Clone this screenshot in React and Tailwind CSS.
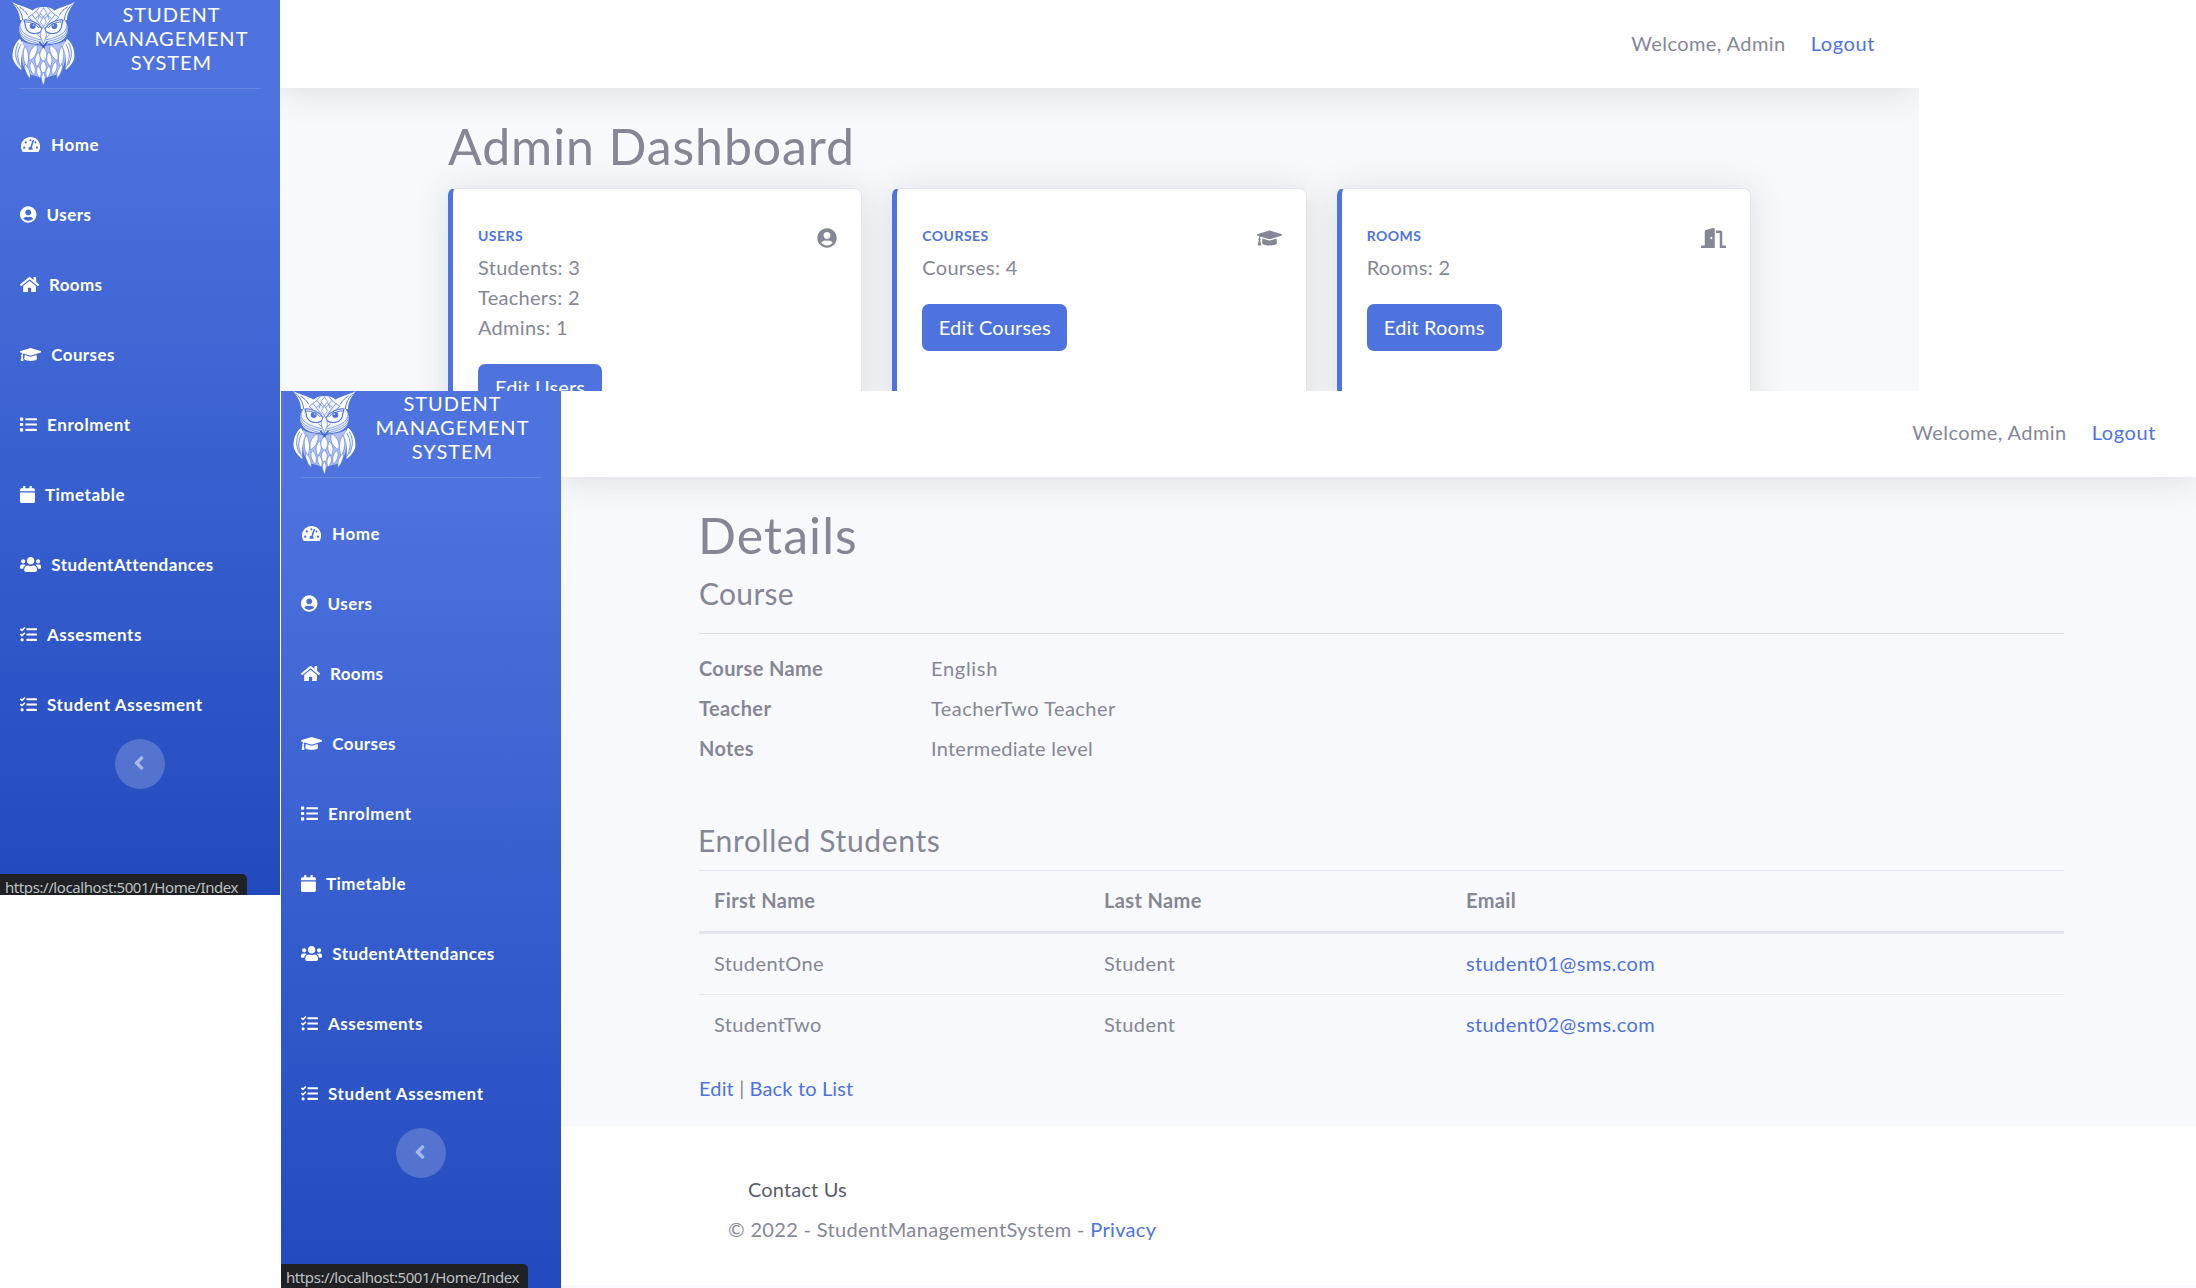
import {
  FaTachometerAlt,
  FaUserCircle,
  FaHome,
  FaGraduationCap,
  FaList,
  FaCalendar,
  FaUsers,
  FaTasks,
  FaAngleLeft,
  FaDoorOpen,
} from "react-icons/fa";

const NAV = [
  { label: "Home", icon: FaTachometerAlt, size: "w-[19.1px] mx-px", tracking: "tracking-[0.5px]" },
  { label: "Users", icon: FaUserCircle, size: "w-[16.5px]", tracking: "tracking-[0.5px]" },
  { label: "Rooms", icon: FaHome, size: "w-[19.1px]", tracking: "tracking-[0.3px]" },
  { label: "Courses", icon: FaGraduationCap, size: "w-[21.25px]", tracking: "tracking-[0.4px]" },
  { label: "Enrolment", icon: FaList, size: "w-[17px]", tracking: "tracking-[0.6px]" },
  { label: "Timetable", icon: FaCalendar, size: "w-[14.9px]", tracking: "tracking-[0.5px]" },
  { label: "StudentAttendances", icon: FaUsers, size: "w-[21.25px]", tracking: "tracking-[0.45px]" },
  { label: "Assesments", icon: FaTasks, size: "w-[17px]", tracking: "tracking-[0.5px]" },
  { label: "Student Assesment", icon: FaTasks, size: "w-[17px]", tracking: "tracking-[0.6px]" },
];

function OwlHalf() {
  return (
    <g>
      {/* ear tuft */}
      <path d="M37 6 C56 18 84 22 98 32 C92 42 82 50 74 62 L60 60 C60 40 50 24 37 6Z" fill="#fff" />
      <path d="M45 14 C60 28 66 42 68 60 M58 21 C74 30 80 40 84 48" stroke="#4e73df" strokeWidth="3" />
      {/* head and cheek */}
      <path d="M96 33 C104 24 118 20 130 21 L130 134 C100 132 66 128 60 100 C54 84 60 66 74 54Z" fill="#fff" fillOpacity="0.93" />
      {/* forehead scales */}
      <path
        d="M118 22 L108 34 L118 46 L130 32 M108 34 L96 44 L106 56 L118 46 L130 60 M96 44 L84 52 L96 62 M106 56 L122 76 M118 46 L114 58"
        stroke="#6d8ce5"
        strokeWidth="2.5"
      />
      {/* brow and eye */}
      <path d="M72 60 C84 58 110 64 126 86 C124 98 112 102 98 100 C84 98 76 86 76 76Z" fill="#fff" stroke="#4e73df" strokeWidth="3.5" />
      <circle cx="98" cy="78" r="9" fill="#4e73df" />
      <circle cx="101" cy="75" r="2.5" fill="#fff" />
      <path d="M76 66 C92 66 108 72 118 84" stroke="#4e73df" strokeWidth="3" />
      {/* facial disc feathers */}
      <path
        d="M60 74 C60 100 84 110 124 120 M58 84 C62 110 88 118 124 126 M58 98 C68 118 92 124 120 132 M112 104 C118 108 122 112 126 118"
        stroke="#6d8ce5"
        strokeWidth="2.5"
      />
      {/* wing */}
      <path d="M60 116 C44 130 36 148 38 174 C42 190 54 202 64 210 C64 190 60 164 72 140Z" fill="#fff" />
      <path d="M56 128 C44 150 44 170 56 194 M64 132 C50 154 50 172 62 202" stroke="#4e73df" strokeWidth="2.5" />
      {/* flank */}
      <path d="M66 122 C84 134 106 132 126 138 L130 236 C116 232 90 220 82 226 C80 214 66 196 66 178 C62 160 62 140 66 122Z" fill="#fff" fillOpacity="0.55" />
      <g fill="#fff" stroke="#5c7fe2" strokeWidth="2">
        <path d="M110 134 C92 144 84 160 88 182 C104 174 116 156 110 134Z" />
        <path d="M76 138 C66 156 68 180 80 200 C88 184 88 158 76 138Z" />
        <path d="M116 156 C104 168 102 184 110 200 C122 188 124 170 116 156Z" />
        <path d="M94 184 C86 196 90 214 104 226 C108 210 106 196 94 184Z" />
        <path d="M74 192 C72 204 78 222 90 236 C92 220 88 204 74 192Z" />
        <path d="M114 198 C106 210 110 224 120 234 C126 222 124 208 114 198Z" />
      </g>
    </g>
  );
}

function OwlLogo() {
  return (
    <svg viewBox="0 0 264 264" className="h-[88px] w-[88px] shrink-0" fill="none" aria-hidden="true">
      <OwlHalf />
      <g transform="translate(261 0) scale(-1 1)">
        <OwlHalf />
      </g>
      <g fill="#fff" stroke="#5c7fe2" strokeWidth="2">
        <path d="M130 24 L140 38 L130 52 L120 38Z" />
        <path d="M130 50 L139 66 L130 80 L121 66Z" />
        <path d="M130 80 C138 92 140 100 139 108 L130 132 L121 108 C120 100 122 92 130 80Z" />
        <path d="M130 142 C144 156 144 172 130 186 C116 172 116 156 130 142Z" />
        <path d="M130 182 C142 196 142 208 130 222 C118 208 118 196 130 182Z" />
        <path d="M130 216 C138 228 136 242 130 256 C124 242 122 228 130 216Z" />
      </g>
      <path d="M118 126 L130 140 L142 126" stroke="#3f63d0" strokeWidth="5" />
    </svg>
  );
}

function Sidebar() {
  return (
    <aside className="relative z-10 flex w-[280px] shrink-0 flex-col items-center overflow-hidden bg-linear-to-b from-[#4e73df] from-10% to-[#224abe]">
      <div className="flex h-[88px] w-full shrink-0">
        <OwlLogo />
        <div className="w-[167px] pt-[2px] text-center text-xl leading-6 tracking-[1px] text-white">
          STUDENT
          <br />
          MANAGEMENT
          <br />
          SYSTEM
        </div>
      </div>
      <div className="h-px w-[240px] shrink-0 bg-white/15" />
      <nav className="mt-5 w-full">
        {NAV.map(({ label, icon: Icon, size, tracking }) => (
          <a key={label} className="flex h-[70px] items-center gap-[10px] pl-5 text-white">
            <Icon className={`h-[17px] shrink-0 ${size}`} />
            <span className={`pt-px text-[17px] font-bold ${tracking}`}>{label}</span>
          </a>
        ))}
      </nav>
      <button className="flex size-[50px] shrink-0 items-center justify-center rounded-full bg-white/20 pr-[3px] pb-[3px] text-white/50">
        <FaAngleLeft className="h-[22px] w-[14px]" />
      </button>
    </aside>
  );
}

function StatusUrl({ className }) {
  return (
    <div
      className={`absolute bottom-0 left-0 z-20 w-[247px] overflow-hidden rounded-tr-[5px] bg-[#202124] pl-[5px] font-['Noto_Sans',sans-serif] text-[15px] leading-[27px] tracking-[-0.42px] whitespace-nowrap text-[#bdc1c6] ${className}`}
    >
      https://localhost:5001/Home/Index
    </div>
  );
}

function Topbar({ className }) {
  return (
    <header
      className={`relative flex h-[88px] shrink-0 items-center justify-end gap-[25px] bg-white pb-[3px] text-xl shadow-[0_3px_35px_0_rgba(58,59,69,0.15)] ${className}`}
    >
      <span className="tracking-[0.42px]">Welcome, Admin</span>
      <a className="tracking-[0.6px] text-[#4e73df]">Logout</a>
    </header>
  );
}

function Card({ title, lines, action, actionWidth, icon: Icon, iconWidth }) {
  return (
    <section className="flex h-[260px] items-start justify-between rounded-[7px] border border-l-[5px] border-[#e3e6f0] border-l-[#4e73df] bg-white pt-[36px] pr-6 pl-[25px] shadow-[0_3px_35px_0_rgba(58,59,69,0.15)]">
      <div>
        <h2 className="mb-[6px] text-sm leading-[21px] font-bold tracking-[0.45px] text-[#4e73df]">{title}</h2>
        {lines.map((line) => (
          <p key={line} className="text-xl leading-[30px] tracking-[0.28px]">
            {line}
          </p>
        ))}
        <a
          className={`mt-[22px] flex h-[47px] items-center justify-center rounded-[7px] bg-[#4e73df] pb-[2px] text-xl tracking-[0.15px] text-white ${actionWidth}`}
        >
          {action}
        </a>
      </div>
      <Icon className={`mt-[3px] h-5 ${iconWidth}`} />
    </section>
  );
}

function DashboardScreen() {
  return (
    <div className="absolute top-0 left-0 flex h-[895px] w-[1919px] overflow-hidden">
      <Sidebar />
      <main className="flex h-[391px] grow flex-col overflow-hidden bg-[#f8f9fc]">
        <Topbar className="pr-[44px]" />
        <div className="mt-[28px] ml-[168px] w-[1303px]">
          <h1 className="mb-[12px] text-[50px] leading-[60px] tracking-[0.9px]">Admin Dashboard</h1>
          <div className="grid grid-cols-3 gap-[30px]">
            <Card
              title="USERS"
              lines={["Students: 3", "Teachers: 2", "Admins: 1"]}
              action="Edit Users"
              actionWidth="w-[124px]"
              icon={FaUserCircle}
              iconWidth="w-5"
            />
            <Card
              title="COURSES"
              lines={["Courses: 4"]}
              action="Edit Courses"
              actionWidth="w-[145px]"
              icon={FaGraduationCap}
              iconWidth="w-[25px]"
            />
            <Card
              title="ROOMS"
              lines={["Rooms: 2"]}
              action="Edit Rooms"
              actionWidth="w-[135px]"
              icon={FaDoorOpen}
              iconWidth="w-[25px]"
            />
          </div>
        </div>
      </main>
      <StatusUrl className="h-[21px]" />
    </div>
  );
}

const ROW = "grid h-[60px] grid-cols-[390px_362px_1fr] items-center pl-[15px]";

function DetailsScreen() {
  return (
    <div className="absolute top-[391px] left-[281px] h-[897px] w-[1915px] overflow-hidden bg-white">
      <div className="-mt-[2px] flex h-[899px]">
        <Sidebar />
        <main className="flex grow flex-col bg-[#f8f9fc]">
          <Topbar className="pr-[40px]" />
          <div className="ml-[138px] flex h-[649px] w-[1365px] flex-col pt-[28px] text-xl leading-[30px]">
            <h1 className="-ml-px text-[50px] leading-[60px] tracking-[1.1px]">Details</h1>
            <h2 className="mt-[10px] text-[30px] leading-9 tracking-[0.3px]">Course</h2>
            <hr className="mt-[22px] border-[#dcdee3]" />
            <dl className="mt-[19px] grid grid-cols-[232px_1fr] gap-y-[10px]">
              <dt className="font-bold tracking-[0.35px]">Course Name</dt>
              <dd className="tracking-[0.7px]">English</dd>
              <dt className="font-bold tracking-[0.4px]">Teacher</dt>
              <dd className="tracking-[0.45px]">TeacherTwo Teacher</dd>
              <dt className="font-bold tracking-[0.3px]">Notes</dt>
              <dd className="tracking-[0.25px]">Intermediate level</dd>
            </dl>
            <h2 className="mt-[59px] -ml-px text-[30px] leading-9 tracking-[0.65px]">Enrolled Students</h2>
            <div className="mt-[12px] tracking-[0.38px]">
              <div className={`${ROW} box-content border-t border-b-[3px] border-[#e3e6f0] font-bold`}>
                <span className="pb-[2px]">First Name</span>
                <span className="pb-[2px]">Last Name</span>
                <span className="pb-[2px]">Email</span>
              </div>
              <div className={ROW}>
                <span className="pb-[2px]">StudentOne</span>
                <span className="pb-[2px]">Student</span>
                <a className="pb-[2px] text-[#4e73df]">student01@sms.com</a>
              </div>
              <div className={`${ROW} box-content border-t border-[#e3e6f0]`}>
                <span className="pb-[2px]">StudentTwo</span>
                <span className="pb-[2px]">Student</span>
                <a className="pb-[2px] text-[#4e73df]">student02@sms.com</a>
              </div>
            </div>
            <p className="mt-[18px] tracking-[0.15px]">
              <a className="text-[#4e73df]">Edit</a> | <a className="text-[#4e73df]">Back to List</a>
            </p>
          </div>
          <footer className="h-[159px] bg-white pt-[48px] pl-[167px] text-xl leading-10">
            <p className="-mt-[5px] pl-5 tracking-[0.15px] text-[#5a5c69]">Contact Us</p>
            <p className="tracking-[0.33px]">
              © 2022 - StudentManagementSystem - <a className="text-[#4e73df]">Privacy</a>
            </p>
          </footer>
        </main>
      </div>
      <StatusUrl className="h-6" />
    </div>
  );
}

export default function App() {
  return (
    <div className="relative h-[1288px] w-[2196px] overflow-hidden bg-white font-['Lato',sans-serif] text-[#858796]">
      <DashboardScreen />
      <DetailsScreen />
    </div>
  );
}
